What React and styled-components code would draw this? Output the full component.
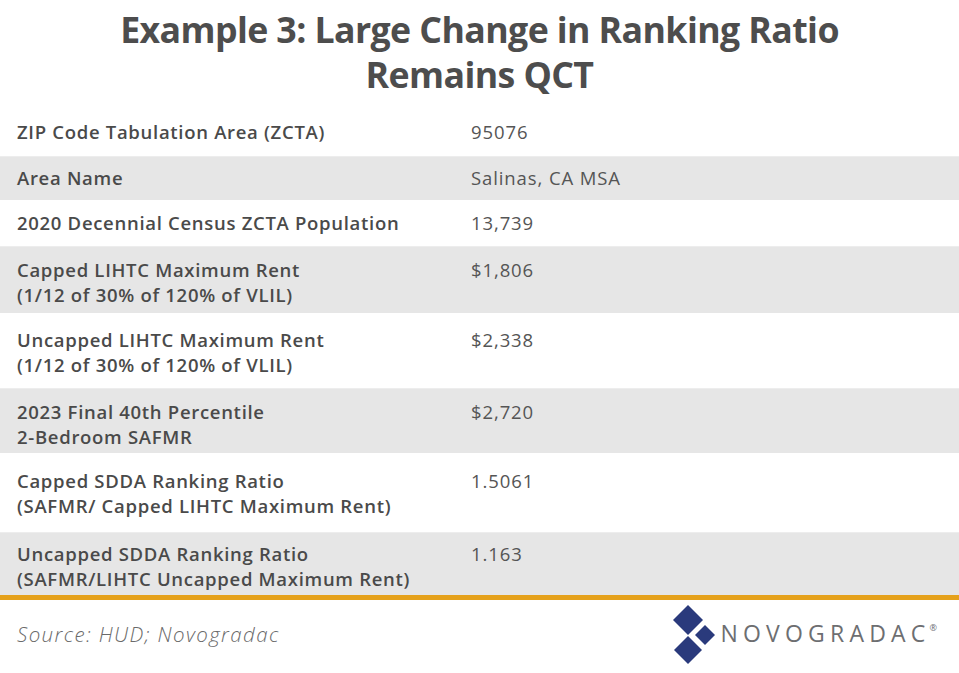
import React from 'react'
import styled, { createGlobalStyle } from 'styled-components'

const GlobalStyle = createGlobalStyle`
  html, body {
    margin: 0;
    padding: 0;
    background: #ffffff;
  }
  body {
    font-family: 'Open Sans', 'Liberation Sans', sans-serif;
    color: #4a4a4a;
  }
`

const Page = styled.div`
  width: 959px;
  height: 673px;
  display: flex;
  flex-direction: column;
  background: #ffffff;
  overflow: hidden;
`

const Title = styled.h1`
  margin: 0;
  padding: 7px 0 0;
  height: 100px;
  box-sizing: border-box;
  text-align: center;
  font-family: 'Open Sans', 'Liberation Sans', sans-serif;
  font-weight: 700;
  font-size: 35.7px;
  line-height: 45px;
  color: #4d4d4d;
  letter-spacing: -0.6px;
`

const Table = styled.div`
  display: flex;
  flex-direction: column;
  margin-top: 8px;
  border-bottom: 5px solid #e5a11b;
`

const Row = styled.div`
  display: grid;
  grid-template-columns: 454px 1fr;
  height: ${p => p.$h}px;
  box-sizing: border-box;
  padding: ${p => p.$pt}px 17px 0;
  background: ${p => (p.$shade ? '#e6e6e6' : '#ffffff')};
  border-top: ${p => (p.$shade ? '1px solid #ededed' : 'none')};
  font-size: 18.5px;
  line-height: 25px;
`

const Label = styled.div`
  font-weight: 600;
  color: #4a4a4a;
  letter-spacing: 0.7px;
`

const Value = styled.div`
  font-weight: 400;
  color: #555555;
  letter-spacing: 0.9px;
`

const Footer = styled.div`
  display: flex;
  align-items: center;
  justify-content: space-between;
  padding: 0 22px 0 17px;
  height: 68px;
`

const Source = styled.div`
  font-style: italic;
  font-weight: 300;
  font-size: 20.5px;
  letter-spacing: 1.4px;
  color: #6a6a6a;
`

const Logo = styled.div`
  display: flex;
  align-items: center;
  gap: 3px;
`

const LogoWord = styled.span`
  font-weight: 400;
  font-size: 23px;
  letter-spacing: 5.2px;
  color: #6d6e71;
  position: relative;
  top: -1px;
`

const Reg = styled.sup`
  font-size: 9px;
  letter-spacing: 0;
  position: relative;
  top: -2px;
  margin-left: -1px;
`

const rows = [
  { label: ['ZIP Code Tabulation Area (ZCTA)'], value: '95076', h: 48, pt: 11 },
  { label: ['Area Name'], value: 'Salinas, CA MSA', h: 44, pt: 8 },
  { label: ['2020 Decennial Census ZCTA Population'], value: '13,739', h: 46, pt: 10 },
  { label: ['Capped LIHTC Maximum Rent', '(1/12 of 30% of 120% of VLIL)'], value: '$1,806', h: 67, pt: 10 },
  { label: ['Uncapped LIHTC Maximum Rent', '(1/12 of 30% of 120% of VLIL)'], value: '$2,338', h: 75, pt: 14 },
  { label: ['2023 Final 40th Percentile', '2-Bedroom SAFMR'], value: '$2,720', h: 65, pt: 10 },
  { label: ['Capped SDDA Ranking Ratio', '(SAFMR/ Capped LIHTC Maximum Rent)'], value: '1.5061', h: 79, pt: 15 },
  { label: ['Uncapped SDDA Ranking Ratio', '(SAFMR/LIHTC Uncapped Maximum Rent)'], value: '1.163', h: 63, pt: 8 },
]

function LogoMark() {
  return (
    <svg width="46" height="60" viewBox="0 0 46 60">
      <polygon points="16,1 31,16 16,31 1,16" fill="#2a3a7c" />
      <polygon points="16,32 30,46 16,60 2,46" fill="#2a3a7c" />
      <polygon points="33,21 43,31 33,41 23,31" fill="#2a3a7c" />
    </svg>
  )
}

export default function App() {
  return (
    <Page>
      <GlobalStyle />
      <Title>
        Example 3: Large Change in Ranking Ratio
        <br />
        Remains QCT
      </Title>
      <Table>
        {rows.map((r, i) => (
          <Row key={i} $shade={i % 2 === 1} $h={r.h} $pt={r.pt}>
            <Label>
              {r.label.map((l, j) => (
                <div key={j}>{l}</div>
              ))}
            </Label>
            <Value>{r.value}</Value>
          </Row>
        ))}
      </Table>
      <Footer>
        <Source>Source: HUD; Novogradac</Source>
        <Logo>
          <LogoMark />
          <LogoWord>
            NOVOGRADAC<Reg>®</Reg>
          </LogoWord>
        </Logo>
      </Footer>
    </Page>
  )
}
